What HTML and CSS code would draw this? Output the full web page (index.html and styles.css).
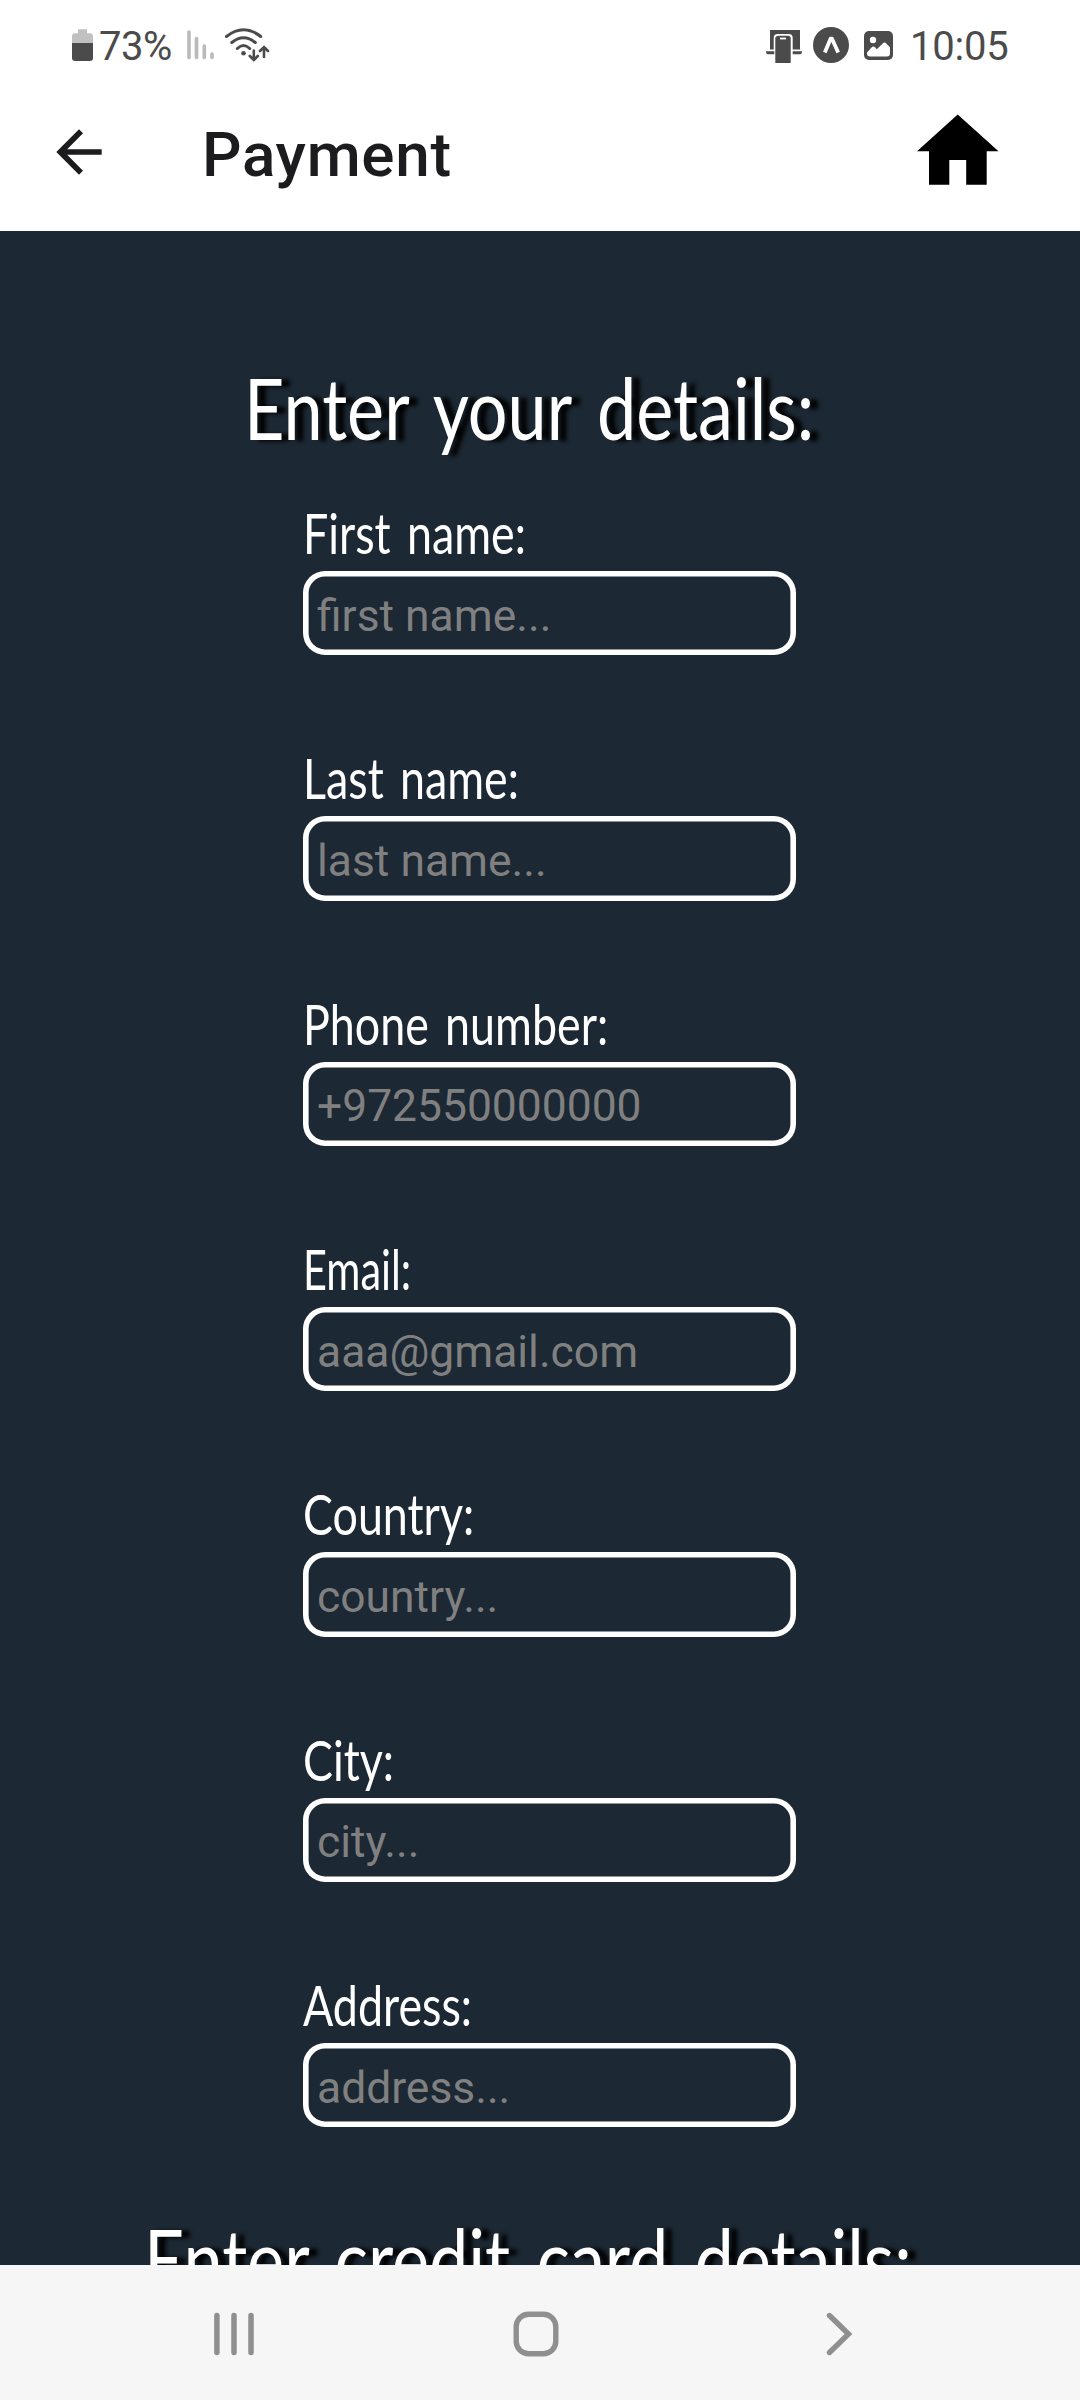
FILE: index.html
```html
<!DOCTYPE html>
<html lang="en">
<head>
<meta charset="utf-8">
<title>Payment</title>
<link rel="stylesheet" href="styles.css">
</head>
<body>
<div class="status">
  <div class="status-side">
    <svg class="battery" width="21" height="32" viewBox="72 29 21 32"><path fill="#c1c1c1" d="M78 29.3h9v4h3q3 0 3 3V44H72v-7.700q0-3 3-3h3z"/><path fill="#4b4b4b" d="M72 43h21v15q0 3-3 3H75q-3 0-3-3z"/></svg>
    <span class="percent">73%</span>
    <svg class="signal" width="30" height="32" viewBox="186 29 30 32"><path stroke="#bababa" stroke-width="3.600" stroke-linecap="round" d="M189 32v25.500M196.500 38.500v19M204.300 46v11.500M212 54v3.500"/></svg>
    <svg class="wifi" width="46" height="36" viewBox="224 26 46 36"><g fill="none" stroke="#4b4b4b" stroke-width="3" stroke-linecap="round"><path d="M226.500 36.500Q243.500 23 260.700 36.500M231.800 42.500Q243.500 33 255.300 42.500M237.300 48.500Q243.500 42.500 249.700 48.500"/><path stroke-width="2.600" d="M253.800 50.500v9M249.800 56l4 4 4-4M264 57V47M260 51l4-4 4 4"/></g><circle cx="243.500" cy="53.300" r="2.300" fill="#4b4b4b"/></svg>
  </div>
  <div class="status-side">
    <svg class="flow" width="36" height="34" viewBox="766 30 36 34"><path fill="#4b4b4b" d="M770 30h30v19.500h-7.300V38q0-4-4-4h-11q-4 0-4 4v11.500H770zM766 51.300h8.300v3H768q-2 0-2-3zM792.700 51.300h9.300q0 3-2 3h-7.300z"/><path fill="#4b4b4b" d="M779 35.700h9q2.700 0 2.700 2.700V63h-15.400V38.400q0-2.700 3.700-2.700z"/><path stroke="#fff" stroke-width="1.800" d="M780 38.500h6"/></svg>
    <svg class="expo" width="36" height="36" viewBox="813 27 36 36"><circle cx="831" cy="45" r="18" fill="#4b4b4b"/><path d="M824.800 52.500L830.600 38.700h1.400L838.200 52.500" fill="none" stroke="#fff" stroke-width="3.800" stroke-linejoin="round"/></svg>
    <svg class="photo" width="29" height="29" viewBox="864 31 29 29"><rect x="864" y="31" width="29" height="29" rx="5" fill="#4b4b4b"/><circle cx="873" cy="40" r="3.200" fill="#fff"/><path fill="#fff" d="M867 52.500l5-5.500q1.500-1 3 .3l1.800 1.900 6.700-6.400q1-.8 2 0l4.500 4.500v6q0 3.200-3 3.200h-17q-3 0-3-3z"/></svg>
    <span class="clock">10:05</span>
  </div>
</div>
<header class="appbar">
  <svg class="back" width="68" height="68" viewBox="0 0 24 24"><path fill="#1c1c1e" d="M20 11H7.830l5.590-5.590L12 4l-8 8 8 8 1.410-1.410L7.830 13H20z"/></svg>
  <h1 class="screen-title">Payment</h1>
  <svg class="house" width="82" height="71" viewBox="0 0 82 71"><path d="M40.700.5L81.500 37.300H69.700V70.700H49.200V46H32.300v24.700H12V37.300H0z"/></svg>
</header>
<main class="content">
  <h2 class="heading heading-details">Enter your details:</h2>
  <form class="form">
    <div class="field"><label class="label" for="first">First name:</label><input class="input" id="first" placeholder="first name..."></div>
    <div class="field"><label class="label" for="last">Last name:</label><input class="input" id="last" placeholder="last name..."></div>
    <div class="field"><label class="label" for="phone">Phone number:</label><input class="input" id="phone" placeholder="+972550000000"></div>
    <div class="field"><label class="label label-tight" for="email">Email:</label><input class="input" id="email" placeholder="aaa@gmail.com"></div>
    <div class="field"><label class="label" for="country">Country:</label><input class="input" id="country" placeholder="country..."></div>
    <div class="field"><label class="label" for="city">City:</label><input class="input" id="city" placeholder="city..."></div>
    <div class="field"><label class="label" for="address">Address:</label><input class="input" id="address" placeholder="address..."></div>
  </form>
  <h2 class="heading heading-card">Enter credit card details:</h2>
</main>
<nav class="navbar">
  <svg width="40" height="44" viewBox="214 2312 40 44"><path stroke="#8f8f8f" stroke-width="5.500" stroke-linecap="round" d="M216.900 2315.500v37M234 2315.500v37M251 2315.500v37"/></svg>
  <svg class="nav-home" width="46" height="46" viewBox="0 0 46 46"><rect x="3.200" y="3.200" width="39.600" height="39.600" rx="12.500" fill="none" stroke="#8f8f8f" stroke-width="5.400"/></svg>
  <svg class="nav-back" width="27" height="44" viewBox="0 0 27 44"><path d="M3.500 3.500L22.500 22l-19 18.500" fill="none" stroke="#8f8f8f" stroke-width="5.400" stroke-linecap="round"/></svg>
</nav>
</body>
</html>
```

FILE: styles.css
```css
* { box-sizing: border-box; }
body { margin: 0; width: 1080px; height: 2400px; overflow: hidden; display: flex; flex-direction: column; background: #fff; font-family: Roboto, sans-serif; }
svg { display: block; flex: none; }

.status { height: 90px; flex: none; display: flex; justify-content: space-between; align-items: flex-start; padding: 0 73px 0 72px; color: #4b4b4b; font-size: 40px; }
.status-side { display: flex; align-items: flex-start; }
.battery { margin-top: 29px; }
.percent { margin: 23px 0 0 6px; width: 87px; line-height: 47px; letter-spacing: -.5px; }
.signal { margin-top: 29px; }
.wifi { margin: 26px 0 0 8px; }
.flow { margin-top: 30px; }
.expo { margin: 27px 0 0 11px; }
.photo { margin: 31px 0 0 15px; }
.clock { margin: 23px 0 0 17px; width: 97px; line-height: 47px; letter-spacing: -.2px; }

.appbar { height: 141px; flex: none; display: flex; align-items: flex-start; padding: 0 81px 0 45px; }
.back { margin-top: 28px; }
.screen-title { margin: 27px 0 0 89px; font-size: 62px; line-height: 76px; font-weight: 500; color: #1c1c1e; letter-spacing: .7px; }
.house { margin: 24px 0 0 auto; }

.content { flex: none; height: 2034px; overflow: hidden; padding-top: 125px; background: #1c2833; color: #fff; }
.heading, .label { width: max-content; white-space: nowrap; font-family: Lato, sans-serif; transform-origin: left; }
.heading { margin: 0; font-size: 85px; line-height: 102px; font-weight: 400; word-spacing: 10px; text-shadow: 10px 1px 5px #000; transform: scaleX(.825); }
.heading-details { margin-left: 244px; }
.heading-card { margin-left: 144px; }
.form { width: 493px; margin: 41px 0 80px 303px; display: flex; flex-direction: column; gap: 89px; }
.field { display: flex; flex-direction: column; gap: 5px; height: 156.330px; }
.label { height: 67px; line-height: 67px; font-size: 56px; word-spacing: 6px; transform: scaleX(.8); }
.label-tight { transform: scaleX(.74); }
.input { width: 493px; height: 84.500px; border: 0; box-shadow: inset 0 0 0 5.600px #fff; border-radius: 22px; padding: 5px 14px 0; background: transparent; color: #fff; font: 400 44.400px Roboto, sans-serif; outline: 0; }
.input::placeholder { color: #808080; opacity: 1; }

.navbar { flex: 1; display: flex; align-items: flex-start; padding: 47px 0 0 214px; background: #f6f6f6; }
.nav-home { margin: -1px 0 0 259px; }
.nav-back { margin-left: 267px; }
```
